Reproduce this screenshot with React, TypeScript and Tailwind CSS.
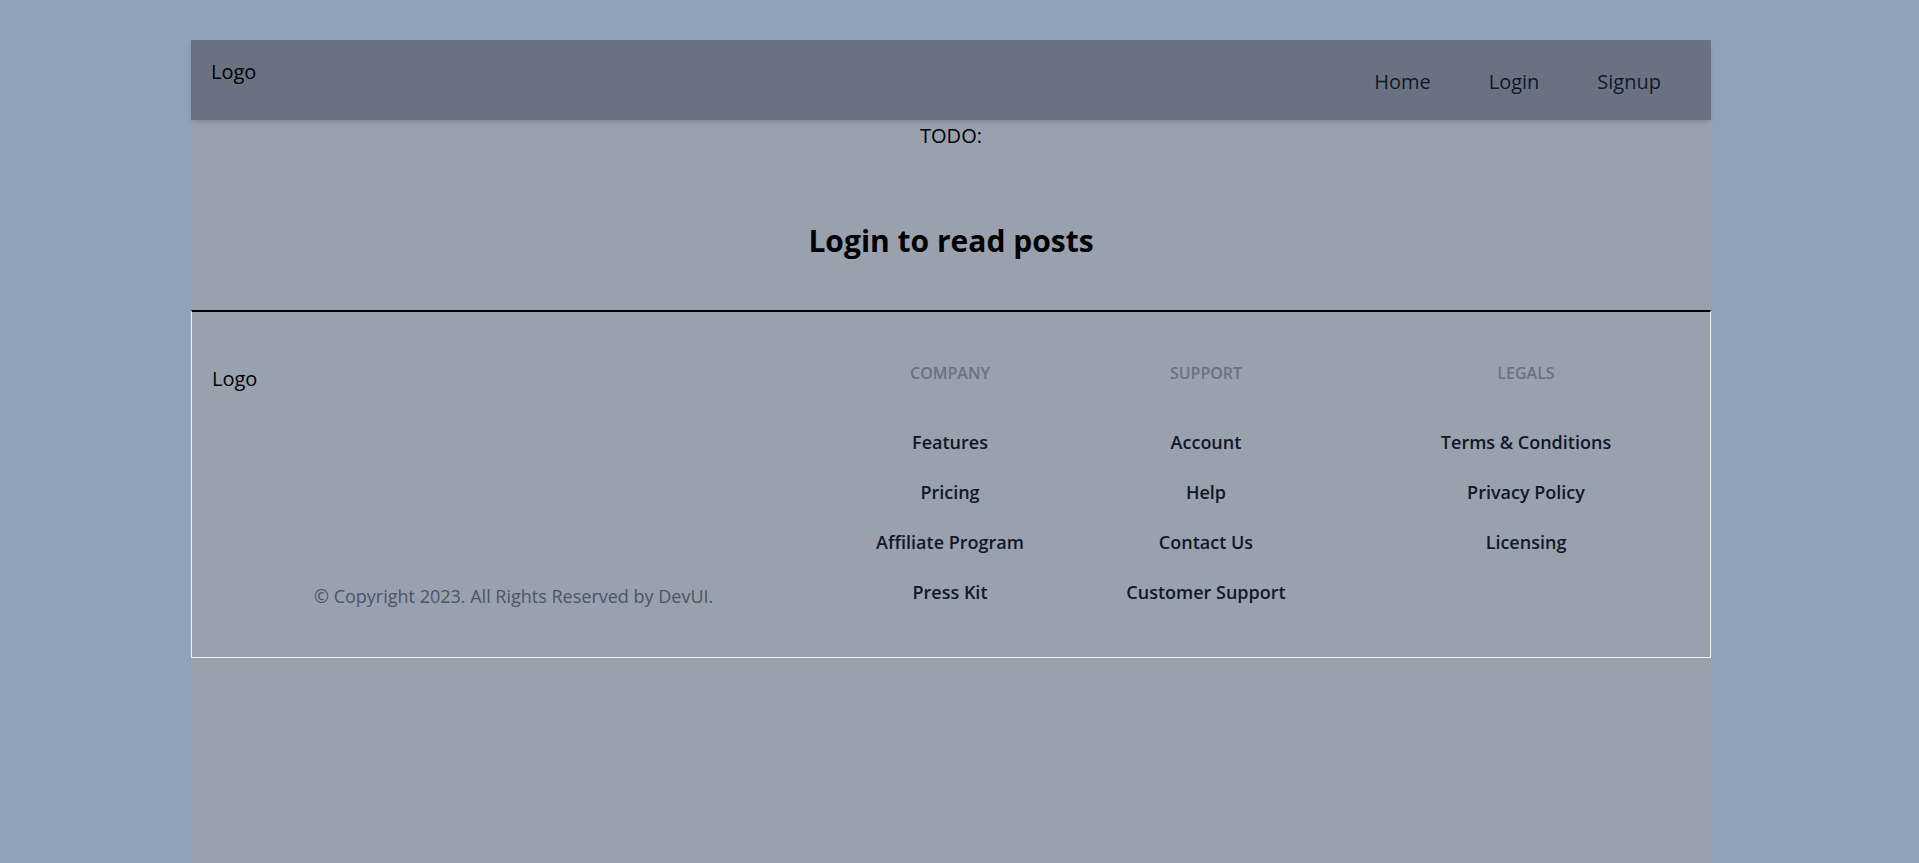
import React from 'react';

const columns = [
  { title: 'Company', w: 'w-[200px]', links: ['Features', 'Pricing', 'Affiliate Program', 'Press Kit'] },
  { title: 'Support', w: 'w-[312px]', links: ['Account', 'Help', 'Contact Us', 'Customer Support'] },
  { title: 'Legals', w: 'w-[328px]', links: ['Terms & Conditions', 'Privacy Policy', 'Licensing'] },
];

const Navbar: React.FC = () => (
  <header className="h-20 bg-gray-500 shadow-md flex justify-between items-start">
    <a href="#" className="pt-[18px] pl-5 text-xl text-black">Logo</a>
    <nav className="self-center pt-[3px] flex items-center gap-[58px] pr-[50px] text-xl text-gray-900">
      <a href="#">Home</a>
      <a href="#">Login</a>
      <a href="#">Signup</a>
    </nav>
  </header>
);

const Footer: React.FC = () => (
  <footer className="border-x border-b border-gray-100 border-t-2 border-t-black flex px-5 pt-[49px] pb-[47px]">
    <div className="flex-1 flex flex-col">
      <a href="#" className="mt-1 text-xl text-black">Logo</a>
      <p className="mt-[189px] ml-[102px] text-lg text-gray-600">© Copyright 2023. All Rights Reserved by DevUI.</p>
    </div>
    {columns.map(col => (
      <div key={col.title} className={`${col.w} flex flex-col items-center text-center`}>
        <h3 className="text-base font-semibold uppercase text-gray-500">{col.title}</h3>
        <ul className="mt-[43px] flex flex-col gap-[22px]">
          {col.links.map(l => (
            <li key={l}>
              <a href="#" className="text-lg font-semibold text-gray-900">{l}</a>
            </li>
          ))}
        </ul>
      </div>
    ))}
  </footer>
);

export default function App() {
  return (
    <div
      className="min-h-screen bg-slate-400 pt-10 pb-[42px] pr-[17px]"
      style={{ fontFamily: '"Open Sans", "Noto Sans", sans-serif' }}
    >
      <div className="w-[1520px] mx-auto min-h-screen bg-gray-400">
        <Navbar />
        <main className="flex flex-col items-center">
          <p className="mt-[2px] text-xl text-black">TODO:</p>
          <h1 className="mt-[73px] mb-[51px] text-3xl font-bold text-black">Login to read posts</h1>
        </main>
        <Footer />
      </div>
    </div>
  );
}
